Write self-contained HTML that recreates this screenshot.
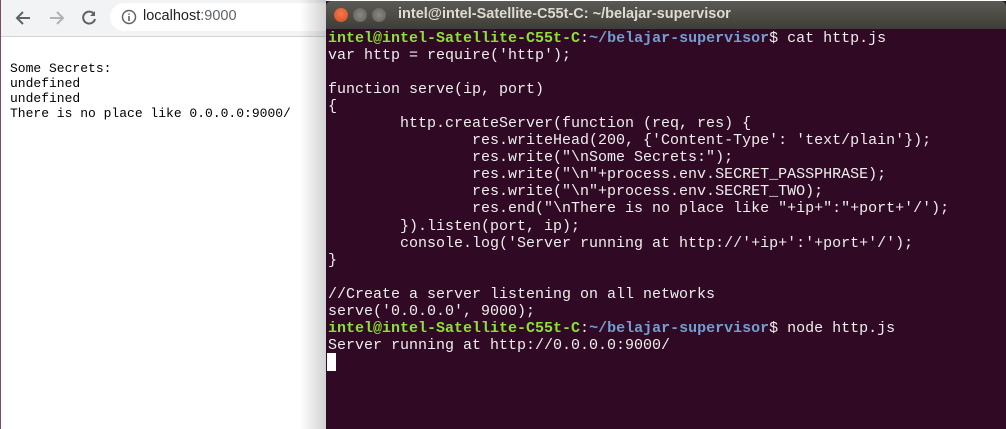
<!DOCTYPE html>
<html><head><style>
body{margin:0;width:1006px;height:429px;overflow:hidden;background:#fff;position:relative;font-family:"Liberation Sans",sans-serif}
.tb{position:absolute;left:0;top:0;width:330px;height:36px;background:#f1f3f4;border-bottom:1px solid #d4d4d4}
.pill{position:absolute;left:110px;top:3px;width:230px;height:28px;background:#fff;border-radius:14px}
.url{position:absolute;left:143px;top:8px;font-size:14.5px;color:#202124}
.pg{position:absolute;left:10px;top:61px;font-family:"Liberation Mono",monospace;font-size:13px;line-height:15px;white-space:pre;color:#000}
.edge{position:absolute;left:0;top:0;width:1px;height:429px;background:#7a4a6a}
.shadow{position:absolute;left:300px;top:0;width:26px;height:429px;background:linear-gradient(to right,rgba(0,0,0,0),rgba(0,0,0,0.18))}
.term{position:absolute;left:326px;top:1px;width:680px;height:428px;background:#300a24}
.title{height:28px;background:linear-gradient(#5b5a55,#3e3d39);border-radius:5px 5px 0 0;position:relative}
.tt{position:absolute;left:72px;top:5px;color:#dfdbd2;font-size:14.5px;font-weight:bold;font-family:"Liberation Sans",sans-serif}
.btn{position:absolute;top:7px;width:14px;height:14px;border-radius:50%}
.code{position:absolute;left:2px;top:29px;font-family:"Liberation Mono",monospace;font-size:15px;line-height:17.05px;white-space:pre;color:#eeeeec}
.g{color:#8ae234;font-weight:bold}.b{color:#729fcf;font-weight:bold}
.cur{position:absolute;left:1px;top:352px;width:9px;height:18px;background:#fff}
</style></head><body>
<div class="tb">
<svg style="position:absolute;left:14px;top:9px" width="18" height="18" viewBox="0 0 18 18"><path d="M16 9H3M9 3L3 9l6 6" stroke="#5f6368" stroke-width="2" fill="none"/></svg>
<svg style="position:absolute;left:48px;top:9px" width="18" height="18" viewBox="0 0 18 18"><path d="M2 9h13M9 3l6 6-6 6" stroke="#b0b3b7" stroke-width="2" fill="none"/></svg>
<svg style="position:absolute;left:80px;top:9px" width="18" height="18" viewBox="0 0 18 18"><path d="M14 5A6 6 0 1 0 15 10" stroke="#5f6368" stroke-width="2" fill="none"/><path d="M15 2v5h-5z" fill="#5f6368"/></svg>
<div class="pill"></div>
<svg style="position:absolute;left:121px;top:9px" width="16" height="16" viewBox="0 0 16 16"><circle cx="8" cy="8" r="6.5" stroke="#5f6368" stroke-width="1.5" fill="none"/><path d="M8 7v5M8 4.5v1.2" stroke="#5f6368" stroke-width="1.6"/></svg>
<div class="url">localhost<span style="color:#5f6368">:9000</span></div>
</div>
<div class="edge"></div>
<div class="pg">Some Secrets:
undefined
undefined
There is no place like 0.0.0.0:9000/</div>
<div class="shadow"></div>
<div class="term">
<div class="title">
<div class="btn" style="left:8px;background:radial-gradient(circle at 50% 40%,#f47b4f,#d9461f)"></div>
<div class="btn" style="left:27px;background:radial-gradient(#8a8984,#5e5d58)"></div>
<div class="btn" style="left:46px;background:radial-gradient(#8a8984,#5e5d58)"></div>
<div class="tt">intel@intel-Satellite-C55t-C: ~/belajar-supervisor</div>
</div>
<div class="code"><span class="g">intel@intel-Satellite-C55t-C</span>:<span class="b">~/belajar-supervisor</span>$ cat http.js
var http = require('http');

function serve(ip, port)
{
        http.createServer(function (req, res) {
                res.writeHead(200, {'Content-Type': 'text/plain'});
                res.write("\nSome Secrets:");
                res.write("\n"+process.env.SECRET_PASSPHRASE);
                res.write("\n"+process.env.SECRET_TWO);
                res.end("\nThere is no place like "+ip+":"+port+'/');
        }).listen(port, ip);
        console.log('Server running at http://'+ip+':'+port+'/');
}

//Create a server listening on all networks
serve('0.0.0.0', 9000);
<span class="g">intel@intel-Satellite-C55t-C</span>:<span class="b">~/belajar-supervisor</span>$ node http.js
Server running at http://0.0.0.0:9000/</div>
<div class="cur"></div>
</div>
</body></html>
